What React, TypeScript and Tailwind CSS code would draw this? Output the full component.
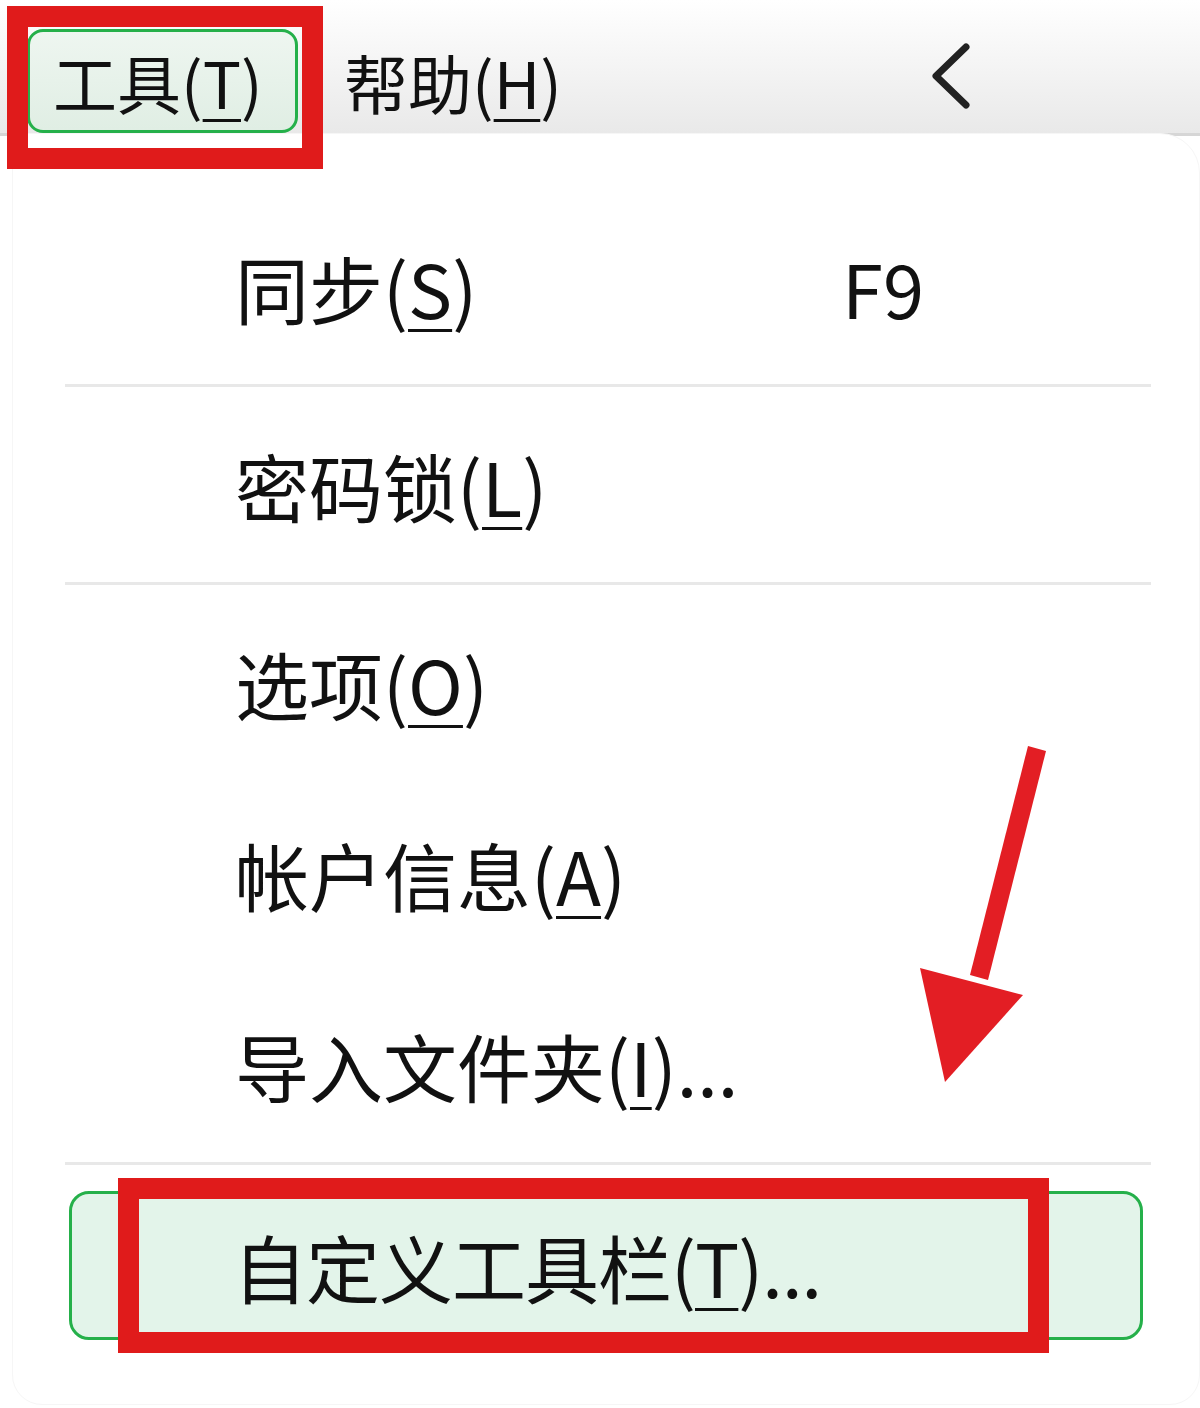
import { ReactNode } from "react";

const font = { fontFamily: '"Noto Sans CJK SC", "Noto Sans", sans-serif' };

const Key = ({ k }: { k: string }) => (
  <>
    (<span className="underline decoration-[3px] underline-offset-[10px]">{k}</span>)
  </>
);

const Item = ({ children, right }: { children: ReactNode; right?: string }) => (
  <div className="h-[191px] flex items-center pl-[222px] pr-[275px] justify-between">
    <span>{children}</span>
    {right && <span>{right}</span>}
  </div>
);

const Divider = () => <div className="h-[3px] bg-[#e8e8e8] ml-[52px] mr-[48px] my-[2px]" />;

export default function App() {
  return (
    <div className="w-[1200px] h-[1408px] bg-white relative overflow-hidden text-[#111]" style={font}>
      {/* menu bar */}
      <div className="h-[136px] flex items-end pl-[27px] bg-gradient-to-b from-white to-[#e9e9e9] border-b-[3px] border-[#d6d6d6]">
        <div className="w-[271px] h-[104px] rounded-[16px] border-[3px] border-[#25b04a] bg-gradient-to-b from-[#eef6f0] to-[#e0eee4] flex items-center pl-[23px] text-[64px]">
          工具<Key k="T" />
        </div>
        <div className="ml-[46px] h-[104px] flex items-center text-[64px]">
          帮助<Key k="H" />
        </div>
        <svg className="ml-[368px] mb-[24px]" width="44" height="66" viewBox="0 0 44 66">
          <path d="M36 4 L6 33 L36 62" fill="none" stroke="#222" strokeWidth="7" strokeLinecap="round" strokeLinejoin="round" />
        </svg>
      </div>

      {/* dropdown panel */}
      <div className="bg-white mt-[-3px] ml-[12px] rounded-tr-[40px] rounded-b-[30px] h-[1272px] pt-[57px] text-[74px] border border-[#f6f6f6]">
        <Item right="F9">
          同步<Key k="S" />
        </Item>
        <Divider />
        <Item>
          密码锁<Key k="L" />
        </Item>
        <Divider />
        <Item>
          选项<Key k="O" />
        </Item>
        <Item>
          帐户信息<Key k="A" />
        </Item>
        <Item>
          导入文件夹<Key k="I" />...
        </Item>
        <Divider />
        <div className="h-[191px] pt-[24px] px-[56px]">
          <div className="h-[149px] rounded-[20px] border-[3px] border-[#25b04a] bg-[#e3f4ea] flex items-center pl-[161px] tracking-[-1px]">
            自定义工具栏<Key k="T" />...
          </div>
        </div>
      </div>

      {/* annotations */}
      <div className="absolute left-[7px] top-[6px] w-[316px] h-[163px] border-[21px] border-[#e01b1b]" />
      <div className="absolute left-[118px] top-[1178px] w-[931px] h-[175px] border-[21px] border-[#e01b1b]" />
      <svg className="absolute left-[900px] top-[730px]" width="160" height="370" viewBox="0 0 160 370">
        <polygon points="128,16 146,21 88,250 70,245" fill="#e31e24" />
        <polygon points="20,238 123,265 45,352" fill="#e31e24" />
      </svg>
    </div>
  );
}
